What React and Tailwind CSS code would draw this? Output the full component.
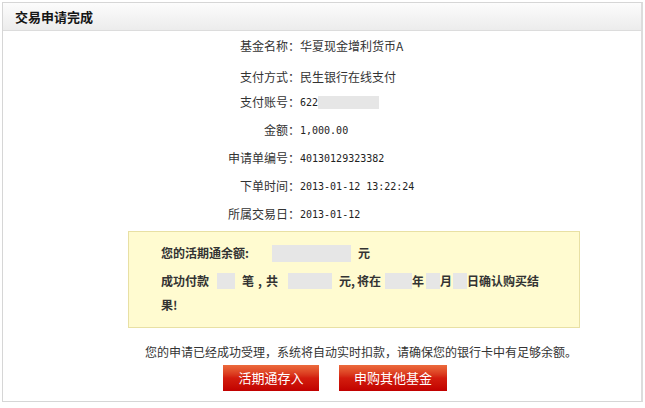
import React from "react";

const cjk = { fontFamily: '"Noto Sans CJK SC", "Liberation Sans", sans-serif' };

const rows = [
  { label: "基金名称：", value: "华夏现金增利货币A", mono: false, cls: "mt-[1px]" },
  { label: "支付方式：", value: "民生银行在线支付", mono: false, cls: "mt-[3px]" },
  { label: "支付账号：", value: "622", mono: true, cls: "mt-[-3px]", mask: true },
  { label: "金额：", value: "1,000.00", mono: true, cls: "" },
  { label: "申请单编号：", value: "40130129323382", mono: true, cls: "" },
  { label: "下单时间：", value: "2013-01-12 13:22:24", mono: true, cls: "" },
  { label: "所属交易日：", value: "2013-01-12", mono: true, cls: "" },
];

const Blank = ({ className }) => (
  <span className={"inline-block h-[16px] bg-[#e6e6e6] align-middle " + className}></span>
);

const App = () => {
  return (
    <div className="w-[645px] h-[408px] bg-white pt-[2px] pl-[2px]" style={cjk}>
      <div className="w-[641px] h-[400px] border-l border-t border-b border-[#d6d6d6] border-r-2 border-r-[#dcdcdc] text-[12px] text-[#333]">
        {/* header */}
        <div className="h-[28px] border-b border-[#dcdcdc] bg-gradient-to-b from-[#fcfcfc] to-[#ececec] flex items-center pl-[12px]">
          <span className="text-[13px] font-bold text-[#151515]">交易申请完成</span>
        </div>

        {/* detail rows */}
        {rows.map((r) => (
          <div key={r.label} className={"flex h-[28px] items-center " + r.cls}>
            <div className="w-[297px] text-right">{r.label}</div>
            {r.mono ? (
              <span className="text-[10px] text-[#222]" style={{ fontFamily: '"DejaVu Sans Mono", monospace' }}>
                {r.value}
              </span>
            ) : (
              <span>{r.value}</span>
            )}
            {r.mask && <span className="inline-block w-[61px] h-[13px] bg-[#e6e6e6]"></span>}
          </div>
        ))}

        {/* yellow notice */}
        <div className="mt-[3px] ml-[125px] w-[452px] h-[97px] border border-[#e8e0a4] bg-[#fffbd0] pt-[9px] pl-[32px] font-bold text-[#333]">
          <div className="h-[24px] flex items-center">
            <span>您的活期通余额:</span>
            <Blank className="w-[79px] h-[17px] ml-[23px]" />
            <span className="ml-[7px]">元</span>
          </div>
          <div className="mt-[4px] leading-[24px]">
            <div className="flex items-center h-[24px] whitespace-nowrap">
              <span>成功付款</span>
              <Blank className="w-[18px] ml-[8px]" />
              <span className="ml-[7px]">笔</span>
              <span className="w-[12px] text-center">,</span>
              <span>共</span>
              <Blank className="w-[44px] ml-[10px]" />
              <span className="ml-[7px]">元,</span>
              <span className="ml-[2px]">将在</span>
              <Blank className="w-[27px] ml-[4px]" />
              <span>年</span>
              <Blank className="w-[14px] ml-[2px]" />
              <span>月</span>
              <Blank className="w-[14px] ml-[1px]" />
              <span>日确认购买结</span>
            </div>
            <div className="h-[24px]">果!</div>
          </div>
        </div>

        {/* bottom note */}
        <div className="mt-[12px] ml-[142px] h-[24px] flex items-center">
          您的申请已经成功受理，系统将自动实时扣款，请确保您的银行卡中有足够余额。
        </div>

        <div className="mt-[1px] ml-[220px] flex gap-[20px]">
          <button className="w-[96px] h-[26px] text-white text-[13px] bg-gradient-to-b from-[#ec6a3c] via-[#d31c0e] to-[#c10000]">
            活期通存入
          </button>
          <button className="w-[108px] h-[26px] text-white text-[13px] bg-gradient-to-b from-[#ec6a3c] via-[#d31c0e] to-[#c10000]">
            申购其他基金
          </button>
        </div>
      </div>
    </div>
  );
};

export default App;
